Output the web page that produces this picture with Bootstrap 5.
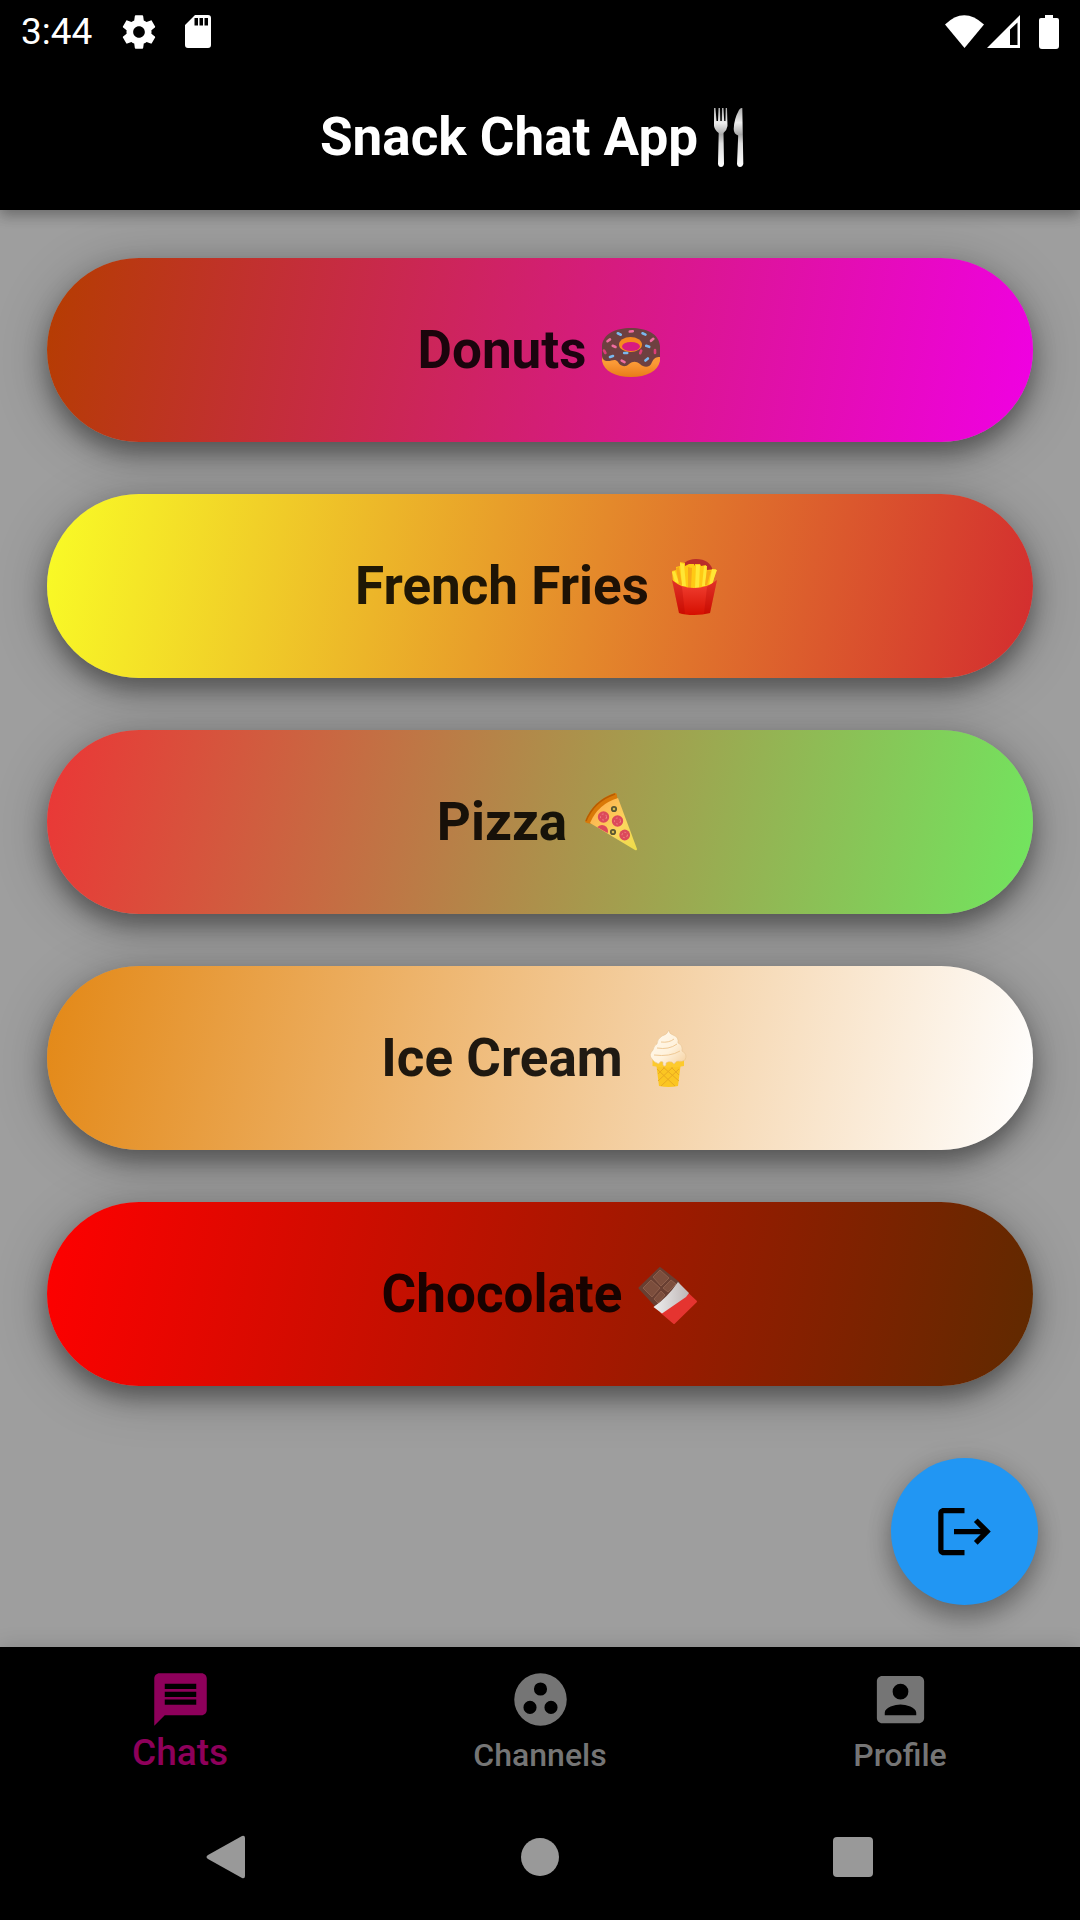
<!DOCTYPE html>
<html lang="en">
<head>
<meta charset="utf-8">
<meta name="viewport" content="width=device-width, initial-scale=1">
<title>Snack Chat App</title>
<link rel="stylesheet" href="https://cdn.jsdelivr.net/npm/bootstrap@5.3.0/dist/css/bootstrap.min.css">
<style>
  body { font-family: Roboto, "Liberation Sans", sans-serif; background: #9e9e9e; }
  svg { display: block; flex: none; }
  .app-top { z-index: 2; box-shadow: 0 6px 12px rgba(0,0,0,.22), 0 2px 16px rgba(0,0,0,.14); }
  .status-strip { height: 63px; padding: 0 20px 0 21px; font-size: 37px; line-height: 44px; }
  .status-icons { gap: 26px; margin-left: 27px; }
  .title-bar { height: 147px; }
  .title-bar h1, .snack { font-size: 53px; font-weight: 700; line-height: 62px; }
  .snack-list { padding: 48px 47px 47px; gap: 52px; }
  .snack { height: 184px; gap: 14px; color: rgba(0,0,0,.87);
    box-shadow: 0 12px 22px rgba(0,0,0,.34), 0 8px 52px rgba(0,0,0,.26); }
  .donuts { background: linear-gradient(101deg, #b53d00, #f000e4); }
  .fries { background: linear-gradient(101deg, #f9fc26, #d32c2f); }
  .pizza { background: linear-gradient(101deg, #eb3636, #71e65f); }
  .icecream { background: linear-gradient(101deg, #e38816, #ffffff); }
  .chocolate { background: linear-gradient(101deg, #ff0000, #5f2a00); }
  .logout { right: 42px; bottom: 42px; width: 147px; height: 147px; background: #2196f3;
    box-shadow: 0 14px 24px rgba(0,0,0,.28), 0 2px 26px rgba(0,0,0,.14); }
  .tab-bar { z-index: 2; height: 147px; padding-top: 21px; box-shadow: 0 0 20px rgba(0,0,0,.15); }
  .tab { color: #757575; font-size: 32px; font-weight: 500; line-height: 48px; }
  .tab.active { color: #8e005b; font-size: 37px; line-height: 44px; }
  .system-bar { height: 126px; padding: 0 70px; }
</style>
<script defer src="https://cdn.jsdelivr.net/npm/bootstrap@5.3.0/dist/js/bootstrap.bundle.min.js"></script>
</head>
<body>
<div class="d-flex flex-column min-vh-100">
  <header class="app-top bg-black text-white position-relative">
    <div class="status-strip d-flex align-items-center">
      <span>3:44</span>
      <div class="status-icons d-flex align-items-center">
        <svg width="40" height="40" viewBox="0 0 24 24" fill="#fff" aria-hidden="true"><path d="M19.43 12.98c.04-.32.07-.64.07-.98s-.03-.66-.07-.98l2.11-1.65c.19-.15.24-.42.12-.64l-2-3.46c-.12-.22-.39-.3-.61-.22l-2.49 1c-.52-.4-1.08-.73-1.69-.98l-.38-2.65C14.46 2.18 14.25 2 14 2h-4c-.25 0-.46.18-.49.42l-.38 2.65c-.61.25-1.17.59-1.69.98l-2.49-1c-.23-.09-.49 0-.61.22l-2 3.46c-.13.22-.07.49.12.64l2.11 1.65c-.04.32-.07.65-.07.98s.03.66.07.98l-2.11 1.65c-.19.15-.24.42-.12.64l2 3.46c.12.22.39.3.61.22l2.49-1c.52.4 1.08.73 1.69.98l.38 2.65c.03.24.24.42.49.42h4c.25 0 .46-.18.49-.42l.38-2.65c.61-.25 1.17-.59 1.69-.98l2.49 1c.23.09.49 0 .61-.22l2-3.46c.12-.22.07-.49-.12-.64l-2.11-1.65zM12 15.5c-1.93 0-3.5-1.57-3.5-3.5s1.57-3.5 3.5-3.5 3.5 1.57 3.5 3.5-1.57 3.5-3.5 3.5z"/></svg>
        <svg width="26" height="33" viewBox="0 0 26 33" aria-hidden="true"><path fill="#fff" fill-rule="evenodd" d="M10 0h13q3 0 3 3v27q0 3-3 3H3q-3 0-3-3V10zM9.500 3v7.500h3.500V3zM14.500 3v7.500H18V3zM19.500 3v7.500H23V3z"/></svg>
      </div>
      <div class="d-flex align-items-center ms-auto">
        <svg width="116" height="34" viewBox="0 0 116 34" fill="#fff" aria-hidden="true">
          <path d="M1 9.500Q20-9 40 9.500L20.500 33z"/>
          <path fill-rule="evenodd" d="M76 0v33H43zM66 14.500V30h7.500V7.500z"/>
          <path d="M101 0h8v3h4q2 0 2 2v26q0 3-3 3H98q-3 0-3-3V5q0-2 2-2h4z"/>
        </svg>
      </div>
    </div>
    <div class="title-bar d-flex align-items-center justify-content-center">
      <h1 class="m-0">Snack Chat App</h1>
      <svg width="62" height="62" viewBox="0 0 62 62" role="img" aria-label="fork and knife">
        <defs><linearGradient id="steel" x2="0" y2="1"><stop offset="0" stop-color="#aaa"/><stop offset=".25" stop-color="#eee"/><stop offset=".45" stop-color="#aaa"/><stop offset=".6" stop-color="#ddd"/><stop offset="1" stop-color="#fff"/></linearGradient></defs>
        <path fill="url(#steel)" d="M16 2h1.500l1 13h1.500L20.500 2h1.500l.3 13h1.500L24 2h1.500l.7 13h1.300L27.700 2h1.300l.5 18q-.5 4-4 7l.5 31q-.5 3-3 3t-3-3l.7-31q-4-3-4.700-7z"/>
        <path fill="url(#steel)" d="M44.300 2q-1.800-.5-3.300 2-5 9-5.300 19 0 5 4.500 6.500L39 58q.5 3 3 3t3.300-3z"/>
      </svg>
    </div>
  </header>

  <main class="position-relative flex-grow-1">
    <div class="snack-list d-flex flex-column">
      <button type="button" class="snack donuts border-0 rounded-pill d-flex align-items-center justify-content-center">
        <span>Donuts</span>
        <svg width="62" height="62" viewBox="0 0 62 62" role="img" aria-label="donut">
          <defs><linearGradient id="dough" x2="0" y2="1"><stop offset=".5" stop-color="#fb9a36"/><stop offset="1" stop-color="#e87b18"/></linearGradient></defs>
          <path fill="url(#dough)" d="M2 30v12c2 10 13 16 29 16s27-6 29-16V30z"/>
          <path fill="#6e4040" d="M2 27C3 15 15 9 31 9s28 6 29 18v11c-4 0-6 1-8 5-2 6-8 6-12 2-4-3-7-3-11 0-4 4-9 2-11-2-3-4-6-1-10-1-4 0-6-2-6-6z"/>
          <ellipse cx="30.500" cy="25.500" rx="11.500" ry="7.500" fill="#f68a1f"/>
          <ellipse cx="31" cy="27.500" rx="9" ry="4.500" fill="#d81b80"/>
          <g stroke-width="2.600" stroke-linecap="round">
            <path stroke="#79b8ee" d="M17.800 14.300l3 1.400M42.500 14.300l3 1.300M46.200 26.800l3 1M24.200 34h3M10 38l3-1M45.400 41.500l2.500-2"/>
            <path stroke="#f06ea0" d="M29.800 12.500l3-.3M7.500 22.200l2.500-1.800M51 21.800l2.300-2M12.700 26.800l2.800 1.200M21.700 41.700l2.800 1.400"/>
            <path stroke="#dc3f78" d="M40.200 34.200l1-2.500M4 31.500l1.400 2.500M55 31v3"/>
          </g>
        </svg>
      </button>
      <button type="button" class="snack fries border-0 rounded-pill d-flex align-items-center justify-content-center">
        <span>French Fries</span>
        <svg width="62" height="62" viewBox="0 0 62 62" role="img" aria-label="french fries">
          <defs><linearGradient id="carton" x2="0" y2="1"><stop offset="0" stop-color="#f44336"/><stop offset="1" stop-color="#d50f00"/></linearGradient></defs>
          <path fill="#b92d2a" d="M17 18Q19 4 33 4t17 12v10H17z"/>
          <path fill="#ffc914" d="M9 16l4-1v-3l4-1V7l5 1v3l4-2h5l1 2V9h5l1 2 5-1 1 5 9-1-4 18-14 6H19l-9-11z"/>
          <path fill="#ffe635" d="M9 17l3-1 4 12-4-1zM17 8l4 1 2 22h-4zM33 10h4l-1 23h-4zM41 11h3l-2 20h-3zM49 14l5 1-5 14-3 1z"/>
          <path fill="#f8a817" d="M13 13l3-1 3 18-3-1zM25 12l4 1-1 20h-3zM44 15l4 1-4 14h-2z"/>
          <path fill="url(#carton)" d="M9 25q9 8 22 8t23-8l-7 33q-7 2-16 2t-15-2z"/>
          <path fill="#a80000" opacity=".25" d="M9 25l10 7 3 27-6-1zM54 25l-10 7-3 27 6-1z"/>
        </svg>
      </button>
      <button type="button" class="snack pizza border-0 rounded-pill d-flex align-items-center justify-content-center">
        <span>Pizza</span>
        <svg width="62" height="62" viewBox="2 0 62 62" role="img" aria-label="pizza">
          <defs><linearGradient id="cheese" x2="1" y2="1"><stop offset="0" stop-color="#ffa54a"/><stop offset=".6" stop-color="#fbd75e"/><stop offset="1" stop-color="#ecdc48"/></linearGradient>
          <clipPath id="slice"><path d="M11 32Q19 13 39 7l19 52z"/></clipPath></defs>
          <path fill="#d97908" d="M6 31Q14 9 36 2q2 0 2 3l1 5Q21 16 13 33l-5-1z"/>
          <path fill="none" stroke="#b85c00" stroke-width="1.500" d="M7 30Q15 10 36 3"/>
          <path fill="url(#cheese)" d="M11 32Q19 13 39 7l19 51q0 2-2 1z"/>
          <g fill="#dc4a5a" clip-path="url(#slice)"><circle cx="24.500" cy="26" r="5.700"/><circle cx="38.500" cy="30" r="5.700"/><circle cx="23" cy="40" r="6"/><circle cx="45.700" cy="44" r="5.400"/></g>
          <g fill="none" stroke="#ef8388" stroke-width="1" stroke-dasharray="2 2"><circle cx="24.500" cy="26" r="3"/><circle cx="38.500" cy="30" r="3"/><circle cx="45.700" cy="44" r="2.700"/></g>
          <g fill="#d7b94c" stroke="#5b5731" stroke-width="1.800"><circle cx="35" cy="18" r="2.200"/><circle cx="34" cy="41" r="2.200"/></g>
        </svg>
      </button>
      <button type="button" class="snack icecream border-0 rounded-pill d-flex align-items-center justify-content-center">
        <span>Ice Cream</span>
        <svg width="62" height="62" viewBox="0 0 62 62" role="img" aria-label="ice cream">
          <defs><linearGradient id="cream" x2="1" y2="1"><stop offset="0" stop-color="#fffaf0"/><stop offset=".55" stop-color="#fff2dc"/><stop offset="1" stop-color="#f5cf9d"/></linearGradient></defs>
          <path fill="#fbc622" d="M19.500 39h24L41 59q-9 2-19 0z"/>
          <path fill="none" stroke="#e9aa20" stroke-width="1" d="M20 42l18 17M26 40l16 14M34 40l8 8M42 42L24 59M36 40L21 54M28 40l-7 7"/>
          <path fill="#fdca2c" d="M15.500 30h31.500v9q-15 3-31.500 0z"/>
          <path fill="url(#cream)" stroke="#e8c493" stroke-width=".6" d="M32 3q0 4 4 5 6 2 5 8 5 2 4 8 6 3 3 9-3 2-7 1-2 0-3 2t-3-1q-4-1-6 1v2q-1 2-3 0v-3q-2-1-3 0-1 3-3 1-3-1-5-4-4-4 1-9 1-5 4-6 0-5 5-8 5-1 7-6z"/>
          <path fill="none" stroke="#efc995" stroke-width="1" d="M24 15q8 1 13-3M20 21q12 2 20-4M17 28q16 2 26-4"/>
        </svg>
      </button>
      <button type="button" class="snack chocolate border-0 rounded-pill d-flex align-items-center justify-content-center">
        <span>Chocolate</span>
        <svg width="62" height="62" viewBox="0 0 62 62" role="img" aria-label="chocolate bar">
          <defs><linearGradient id="foil"><stop offset="0" stop-color="#eee"/><stop offset="1" stop-color="#beb6b6"/></linearGradient></defs>
          <path fill="#693f32" stroke="#693f32" stroke-width="2" stroke-linejoin="round" d="M3.500 25L24 5l19 15-23 23z"/>
          <path fill="#7c4e3d" stroke="#946451" stroke-width=".8" d="M17 14l7-7 9 8-8 8zM7 25l8-8 9 8-8 9zM27 25l8-8 5 4-8 8zM18 36l7-8 4 4-7 8z"/>
          <path fill="#e53430" stroke="#e53430" stroke-width="2" stroke-linejoin="round" d="M25 49l27-18 8 7.500L38 60z"/>
          <path fill="url(#foil)" d="M17.500 44Q31 35 42 19l11 11-3 4-24 16.500z"/>
        </svg>
      </button>
    </div>
    <button type="button" class="logout position-absolute border-0 rounded-circle d-flex align-items-center justify-content-center p-0" aria-label="Log out">
      <svg width="63" height="63" viewBox="0 0 24 24" aria-hidden="true"><path d="M17 7l-1.410 1.410L18.170 11H8v2h10.170l-2.580 2.580L17 17l5-5zM4 5h8V3H4c-1.100 0-2 .9-2 2v14c0 1.100.9 2 2 2h8v-2H4z"/></svg>
    </button>
  </main>

  <footer class="position-relative bg-black">
    <nav class="tab-bar row g-0 bg-black position-relative" aria-label="Main">
      <a href="#" class="tab active col d-flex flex-column align-items-center text-decoration-none" aria-current="page">
        <svg width="63" height="63" viewBox="0 0 24 24" fill="currentColor" aria-hidden="true"><path d="M20 2H4c-1.100 0-1.990.9-1.990 2L2 22l4-4h14c1.100 0 2-.9 2-2V4c0-1.100-.9-2-2-2zm-2 12H6v-2h12v2zm0-3H6V9h12v2zm0-3H6V6h12v2z"/></svg>
        Chats
      </a>
      <a href="#" class="tab col d-flex flex-column align-items-center text-decoration-none">
        <svg width="63" height="63" viewBox="0 0 24 24" fill="currentColor" aria-hidden="true"><path fill-rule="evenodd" d="M12 2a10 10 0 1 0 0 20 10 10 0 0 0 0-20zM8 17.500a2.500 2.500 0 1 1 0-5 2.500 2.500 0 0 1 0 5zM9.500 8a2.500 2.500 0 1 1 5 0 2.500 2.500 0 0 1-5 0zm6.500 9.500a2.500 2.500 0 1 1 0-5 2.500 2.500 0 0 1 0 5z"/></svg>
        Channels
      </a>
      <a href="#" class="tab col d-flex flex-column align-items-center text-decoration-none">
        <svg width="63" height="63" viewBox="0 0 24 24" fill="currentColor" aria-hidden="true"><path fill-rule="evenodd" d="M5 3h14c1.100 0 2 .9 2 2v14c0 1.100-.9 2-2 2H5c-1.100 0-2-.9-2-2V5c0-1.100.9-2 2-2zm10 6a3 3 0 1 0-6 0 3 3 0 0 0 6 0zm-9 8v1h12v-1c0-2-4-3.100-6-3.100S6 15 6 17z"/></svg>
        Profile
      </a>
    </nav>
    <div class="system-bar d-flex align-items-center">
      <a href="#" class="col d-flex justify-content-center" aria-label="Back"><svg width="42" height="44" viewBox="0 0 42 44" fill="#999" aria-hidden="true"><path d="M2 20L36 1q3-1 3 2v38q0 3-3 2L2 24q-3-2 0-4z"/></svg></a>
      <a href="#" class="col d-flex justify-content-center" aria-label="Home"><svg width="40" height="40" viewBox="0 0 40 40" fill="#999" aria-hidden="true"><circle cx="20" cy="20" r="19"/></svg></a>
      <a href="#" class="col d-flex justify-content-center" aria-label="Recent apps"><svg width="40" height="40" viewBox="0 0 40 40" fill="#999" aria-hidden="true"><rect width="40" height="40" rx="4"/></svg></a>
    </div>
  </footer>
</div>
</body>
</html>
